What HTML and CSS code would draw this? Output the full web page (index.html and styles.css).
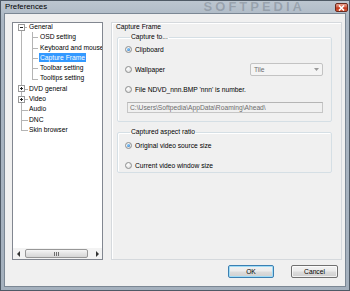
FILE: index.html
```html
<!DOCTYPE html>
<html lang="en">

<head>
    <meta charset="UTF-8">
    <title>Preferences</title>
    <link rel="stylesheet" href="styles.css">
</head>

<body>
    <div class="window">
        <div class="titlebar">
            <span class="title">Preferences</span>
            <span class="watermark">SOFTPEDIA</span>
            <span class="close">
                <svg width="7" height="6" viewBox="0 0 7 6">
                    <path d="M1 0.5 L6 5.5 M6 0.5 L1 5.5" stroke="#fff" stroke-width="1.6" />
                </svg>
            </span>
        </div>

        <div class="client">
            <div class="main">
                <!-- left tree -->
                <div class="tree">
                    <ul class="nodes">
                        <li>
                            <span class="exp minus"></span>
                            <div class="node"><span class="label">General</span></div>
                            <ul class="sub">
                                <li><div class="node"><span class="label">OSD setting</span></div></li>
                                <li><div class="node"><span class="label">Keyboard and mouse</span></div></li>
                                <li><div class="node"><span class="label selected">Capture Frame</span></div></li>
                                <li><div class="node"><span class="label">Toolbar setting</span></div></li>
                                <li><div class="node"><span class="label">Tooltips setting</span></div></li>
                            </ul>
                        </li>
                        <li>
                            <span class="exp plus"></span>
                            <div class="node"><span class="label">DVD general</span></div>
                        </li>
                        <li>
                            <span class="exp plus"></span>
                            <div class="node"><span class="label">Video</span></div>
                        </li>
                        <li><div class="node"><span class="label">Audio</span></div></li>
                        <li><div class="node"><span class="label">DNC</span></div></li>
                        <li><div class="node"><span class="label">Skin browser</span></div></li>
                    </ul>
                    <div class="hscroll">
                        <span class="arrow">
                            <svg width="4" height="6" viewBox="0 0 4 6"><path d="M3 0 L0 3 L3 6 Z" fill="#333" /></svg>
                        </span>
                        <span class="thumb"><span class="grip"></span></span>
                        <span class="track"></span>
                        <span class="arrow">
                            <svg width="4" height="6" viewBox="0 0 4 6"><path d="M1 0 L4 3 L1 6 Z" fill="#333" /></svg>
                        </span>
                    </div>
                </div>

                <!-- right panel -->
                <div class="panel">
                    <div class="panel-title">Capture Frame</div>

                    <fieldset class="group first">
                        <legend>Capture to...</legend>
                        <div class="radio"><span class="dot on"></span>Clipboard</div>
                        <div class="radio">
                            <span class="dot"></span>Wallpaper
                            <span class="combo">Tile
                                <svg width="5" height="3" viewBox="0 0 5 3"><path d="M0 0 L5 0 L2.5 3 Z" fill="#9a9a9a" /></svg>
                            </span>
                        </div>
                        <div class="radio"><span class="dot"></span>File NDVD_nnn.BMP 'nnn' is number.</div>
                        <div class="textbox">C:\Users\Softpedia\AppData\Roaming\Ahead\</div>
                    </fieldset>

                    <fieldset class="group second">
                        <legend>Captured aspect ratio</legend>
                        <div class="radio"><span class="dot on"></span>Original video source size</div>
                        <div class="radio"><span class="dot"></span>Current video window size</div>
                    </fieldset>
                </div>
            </div>

            <div class="buttons">
                <button class="btn default">OK</button>
                <button class="btn">Cancel</button>
            </div>
        </div>
    </div>
</body>

</html>
```

FILE: styles.css
```css
* {
    margin: 0;
    padding: 0;
    box-sizing: border-box;
}

body {
    width: 350px;
    height: 291px;
    overflow: hidden;
    font-family: "Liberation Sans", Arial, sans-serif;
    font-size: 6.7px;
    color: #000;
}

/* window frame */
.window {
    width: 350px;
    height: 291px;
    display: flex;
    flex-direction: column;
    background: linear-gradient(to bottom, #bcc6d0 0, #aab6c3 20px, #a4b0bd 100%);
    border: 1px solid #4f5a66;
    padding: 0 3px 3px 3px;
}

.titlebar {
    height: 12px;
    display: flex;
    align-items: flex-start;
}

.title {
    font-size: 7.8px;
    line-height: 12px;
    padding-left: 1px;
}

.watermark {
    margin-left: auto;
    margin-right: 30px;
    font-size: 13px;
    line-height: 12px;
    font-weight: bold;
    letter-spacing: 3px;
    color: rgba(70, 80, 92, 0.28);
}

.close {
    width: 13px;
    height: 9px;
    margin-top: 2px;
    margin-right: -2px;
    border: 1px solid #6b2a1e;
    border-radius: 2px;
    background: linear-gradient(to bottom, #e9a08e 0, #d2624a 45%, #c2361c 55%, #d65a38 100%);
    display: flex;
    align-items: center;
    justify-content: center;
}

.client {
    flex: 1;
    display: flex;
    flex-direction: column;
    background: #f0f0f0;
    border: 1px solid #7b8794;
    padding: 8px 3px 0 7px;
}

.main {
    height: 238px;
    display: flex;
    gap: 8px;
}

/* tree */
.tree {
    width: 91px;
    border: 1px solid #828790;
    background: #fff;
    display: flex;
    flex-direction: column;
    overflow: hidden;
}

.nodes {
    flex: 1;
    list-style: none;
    margin-top: -1px;
}

.nodes ul {
    list-style: none;
}

.nodes li {
    position: relative;
}

.nodes > li {
    padding-left: 15px;
}

.sub > li {
    padding-left: 11px;
}

.node {
    height: 10.3px;
    line-height: 10.3px;
    white-space: nowrap;
}

.label {
    display: inline-block;
    line-height: 9.4px;
    padding: 0 1px;
}

.label.selected {
    background: #3399ff;
    color: #fff;
}

/* tree lines */
.nodes li::before {
    content: "";
    position: absolute;
    top: 0;
    height: 5.15px;
    border-left: 1px solid #b4b4b4;
    border-bottom: 1px solid #b4b4b4;
}

.nodes li::after {
    content: "";
    position: absolute;
    top: 5.15px;
    bottom: 0;
    border-left: 1px solid #b4b4b4;
}

.nodes li:last-child::after {
    display: none;
}

.nodes > li::before,
.nodes > li::after {
    left: 8px;
    width: 6px;
}

.nodes > li:first-child::before {
    border-left: none;
}

.sub > li::before,
.sub > li::after {
    left: 4px;
    width: 5px;
}

.exp {
    position: absolute;
    left: 5px;
    top: 1.65px;
    width: 7px;
    height: 7px;
    border: 1px solid #9a9a9a;
    z-index: 1;
}

.exp.minus {
    background: linear-gradient(#222, #222) center / 3px 1px no-repeat, #fff;
}

.exp.plus {
    background: linear-gradient(#222, #222) center / 3px 1px no-repeat,
        linear-gradient(#222, #222) center / 1px 3px no-repeat, #fff;
}

/* horizontal scrollbar */
.hscroll {
    height: 11px;
    display: flex;
    align-items: center;
    background: #f3f3f3;
}

.hscroll .arrow {
    width: 11px;
    height: 11px;
    display: flex;
    align-items: center;
    justify-content: center;
}

.hscroll .thumb {
    width: 63px;
    height: 9px;
    margin-left: 1px;
    border: 1px solid #979797;
    border-radius: 2px;
    background: linear-gradient(to bottom, #f6f6f6, #e4e4e4 50%, #d6d6d6);
    display: flex;
    align-items: center;
    justify-content: center;
}

.grip {
    width: 5px;
    height: 4px;
    background: repeating-linear-gradient(to right, #6f6f6f 0, #6f6f6f 1px, transparent 1px, transparent 2px);
}

.hscroll .track {
    flex: 1;
}

/* right panel */
.panel {
    width: 231px;
    border: 1px solid #d5d9dd;
    box-shadow: inset 1px 1px 0 #fff;
    background: #f0f0f0;
}

.panel-title {
    height: 8px;
    line-height: 8px;
    padding-left: 4px;
}

.group {
    margin: 2px 9px 0 5px;
    border: 1px solid #d5dfe5;
    border-radius: 2px;
    box-shadow: inset 1px 1px 0 #fff;
    padding: 0 8px 8px 7px;
}

.group legend {
    margin-left: 5px;
    padding: 0 1px;
    line-height: 8px;
}

.group.second {
    margin-top: 6px;
    padding-top: 2px;
    padding-bottom: 0;
}

.radio {
    height: 16px;
    display: flex;
    align-items: center;
    white-space: nowrap;
}

.radio + .radio {
    margin-top: 4px;
}

.second .radio {
    height: 14px;
}

.second .radio + .radio {
    margin-top: 6px;
}

.dot {
    width: 7px;
    height: 7px;
    margin-right: 3px;
    border: 1px solid #8e8f8f;
    border-radius: 50%;
    background: radial-gradient(circle at 40% 35%, #ffffff, #e2e2e2 70%);
    display: flex;
    align-items: center;
    justify-content: center;
}

.dot.on::after {
    content: "";
    width: 3px;
    height: 3px;
    border-radius: 50%;
    background: radial-gradient(circle at 35% 35%, #8fd0ff, #1c6fc4);
}

.combo {
    margin-left: auto;
    width: 73px;
    height: 13px;
    border: 1px solid #c3c3c3;
    border-radius: 2px;
    background: #f4f4f4;
    color: #6d6d6d;
    padding: 0 3px;
    display: flex;
    align-items: center;
    justify-content: space-between;
}

.textbox {
    margin-top: 5px;
    margin-left: 2px;
    height: 11px;
    line-height: 9px;
    border: 1px solid #c6c6c6;
    border-top-color: #b5b5b5;
    background: #f0f0f0;
    color: #6d6d6d;
    padding-left: 2px;
    white-space: nowrap;
    overflow: hidden;
}

/* dialog buttons */
.buttons {
    margin-top: 5px;
    height: 13px;
    display: flex;
    justify-content: flex-end;
    gap: 17px;
    padding-right: 4px;
}

.btn {
    width: 47px;
    height: 13px;
    font-family: inherit;
    font-size: 6.7px;
    color: #000;
    border: 1px solid #707070;
    border-radius: 2px;
    background: linear-gradient(to bottom, #f2f2f2 0, #ebebeb 48%, #dddddd 52%, #cfcfcf 100%);
    box-shadow: inset 0 0 0 1px rgba(255, 255, 255, 0.7);
}

.btn.default {
    width: 46px;
    border-color: #3c7fb1;
    box-shadow: inset 0 0 0 1px #9fdcf7;
}
```
